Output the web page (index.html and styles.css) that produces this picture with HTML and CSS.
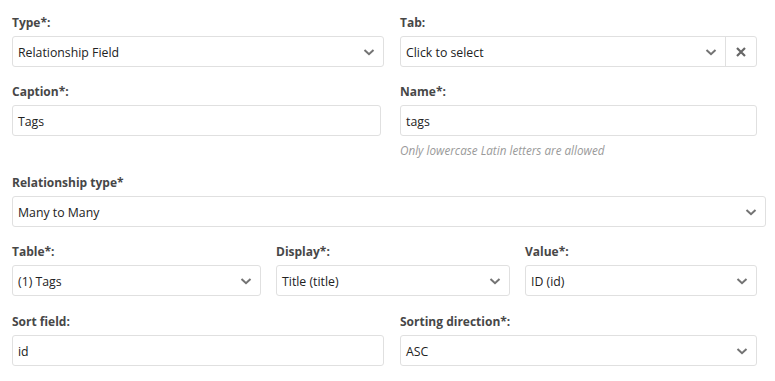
FILE: index.html
```html
<!DOCTYPE html>
<html>
<head>
<meta charset="utf-8">
<link rel="stylesheet" href="styles.css">
</head>
<body>
<div class="form">
  <div class="row two">
    <div class="group">
      <label class="label">Type*:</label>
      <div class="box select"><span class="value">Relationship Field</span><span class="chev"><svg width="14" height="14" viewBox="0 0 14 14"><path d="M2.5 5 L7 9.2 L11.5 5" fill="none" stroke="#737373" stroke-width="2"/></svg></span></div>
    </div>
    <div class="group">
      <label class="label">Tab:</label>
      <div class="box select"><span class="value">Click to select</span><span class="chev"><svg width="14" height="14" viewBox="0 0 14 14"><path d="M2.5 5 L7 9.2 L11.5 5" fill="none" stroke="#737373" stroke-width="2"/></svg></span><span class="clear"><svg width="12" height="12" viewBox="0 0 12 12"><path d="M2 2 L10 10 M10 2 L2 10" fill="none" stroke="#666" stroke-width="2.2"/></svg></span></div>
    </div>
  </div>
  <div class="row two">
    <div class="group">
      <label class="label">Caption*:</label>
      <div class="box input narrow"><span class="value">Tags</span></div>
    </div>
    <div class="group">
      <label class="label">Name*:</label>
      <div class="box input"><span class="value">tags</span></div>
      <div class="hint">Only lowercase Latin letters are allowed</div>
    </div>
  </div>
  <div class="row one">
    <div class="group">
      <label class="label">Relationship type*</label>
      <div class="box select"><span class="value">Many to Many</span><span class="chev"><svg width="14" height="14" viewBox="0 0 14 14"><path d="M2.5 5 L7 9.2 L11.5 5" fill="none" stroke="#737373" stroke-width="2"/></svg></span></div>
    </div>
  </div>
  <div class="row three">
    <div class="group">
      <label class="label">Table*:</label>
      <div class="box select"><span class="value">(1) Tags</span><span class="chev"><svg width="14" height="14" viewBox="0 0 14 14"><path d="M2.5 5 L7 9.2 L11.5 5" fill="none" stroke="#737373" stroke-width="2"/></svg></span></div>
    </div>
    <div class="group">
      <label class="label">Display*:</label>
      <div class="box select"><span class="value">Title (title)</span><span class="chev"><svg width="14" height="14" viewBox="0 0 14 14"><path d="M2.5 5 L7 9.2 L11.5 5" fill="none" stroke="#737373" stroke-width="2"/></svg></span></div>
    </div>
    <div class="group">
      <label class="label">Value*:</label>
      <div class="box select"><span class="value">ID (id)</span><span class="chev"><svg width="14" height="14" viewBox="0 0 14 14"><path d="M2.5 5 L7 9.2 L11.5 5" fill="none" stroke="#737373" stroke-width="2"/></svg></span></div>
    </div>
  </div>
  <div class="row two">
    <div class="group">
      <label class="label">Sort field:</label>
      <div class="box input"><span class="value">id</span></div>
    </div>
    <div class="group">
      <label class="label">Sorting direction*:</label>
      <div class="box select"><span class="value">ASC</span><span class="chev"><svg width="14" height="14" viewBox="0 0 14 14"><path d="M2.5 5 L7 9.2 L11.5 5" fill="none" stroke="#737373" stroke-width="2"/></svg></span></div>
    </div>
  </div>
</div>
</body>
</html>
```
FILE: styles.css
```css
* { box-sizing: border-box; }
html, body { margin: 0; background: #fff; }
body {
  font-family: "Open Sans", "Noto Sans", "DejaVu Sans", sans-serif;
  font-size: 12.3px;
  color: #222;
}
.form {
  width: 754px;
  padding: 14px 0 0 0;
  margin-left: 12px;
  display: flex;
  flex-direction: column;
  gap: 16px;
}
.row { display: grid; }
.row.two { grid-template-columns: 372px 357px; column-gap: 16px; }
.row.one { grid-template-columns: 754px; }
.row.three { grid-template-columns: 249px 234px 232px; column-gap: 15px; margin-bottom: 1px; }
.group { display: flex; flex-direction: column; }
.label {
  display: block;
  font-size: 12px;
  font-weight: 700;
  color: #474747;
  line-height: 18px;
  margin-bottom: 4px;
}
.box {
  height: 31px;
  border: 1px solid #e0e0e0;
  border-radius: 3px;
  display: flex;
  align-items: center;
  padding-left: 5px;
  background: #fff;
}
.box.narrow { width: 369px; }
.value { flex: 1; white-space: nowrap; padding-top: 1px; }
.chev {
  width: 29px;
  display: flex;
  justify-content: center;
  align-items: center;
}
.clear {
  width: 31px;
  height: 100%;
  border-left: 1px solid #e0e0e0;
  display: flex;
  justify-content: center;
  align-items: center;
}
.hint {
  font-size: 11.7px;
  font-style: italic;
  color: #9a9a9a;
  line-height: 16px;
  margin-top: 6px;
}
```
